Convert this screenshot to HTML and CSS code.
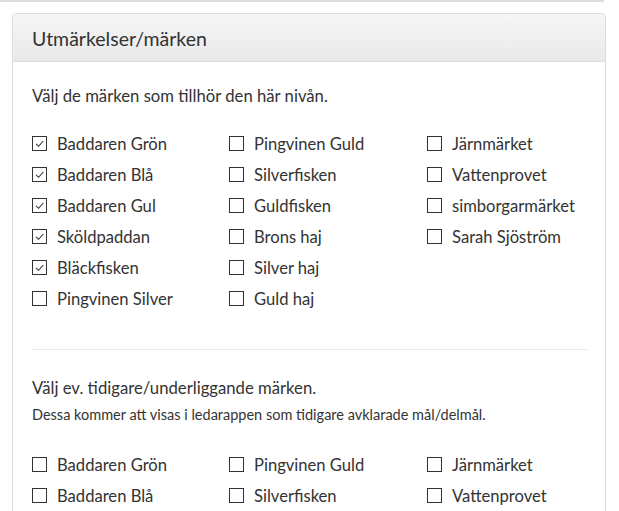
FILE: index.html
```html
<!DOCTYPE html>
<html lang="sv">
<head>
<meta charset="utf-8">
<title>Utmärkelser/märken</title>
<link rel="stylesheet" href="styles.css">
</head>
<body>
<div class="topline"></div>
<div class="panel">
  <div class="panel-heading">Utmärkelser/märken</div>
  <div class="panel-body">
    <p class="lead">Välj de märken som tillhör den här nivån.</p>
    <div class="grid first">
      <label class="cb"><span class="box on"><svg viewBox="0 0 13 13"><path d="M3 6.9 L5.6 9.3 L10.3 4"/></svg></span>Baddaren Grön</label>
      <label class="cb"><span class="box"></span>Pingvinen Guld</label>
      <label class="cb"><span class="box"></span>Järnmärket</label>
      <label class="cb"><span class="box on"><svg viewBox="0 0 13 13"><path d="M3 6.9 L5.6 9.3 L10.3 4"/></svg></span>Baddaren Blå</label>
      <label class="cb"><span class="box"></span>Silverfisken</label>
      <label class="cb"><span class="box"></span>Vattenprovet</label>
      <label class="cb"><span class="box on"><svg viewBox="0 0 13 13"><path d="M3 6.9 L5.6 9.3 L10.3 4"/></svg></span>Baddaren Gul</label>
      <label class="cb"><span class="box"></span>Guldfisken</label>
      <label class="cb"><span class="box"></span>simborgarmärket</label>
      <label class="cb"><span class="box on"><svg viewBox="0 0 13 13"><path d="M3 6.9 L5.6 9.3 L10.3 4"/></svg></span>Sköldpaddan</label>
      <label class="cb"><span class="box"></span>Brons haj</label>
      <label class="cb"><span class="box"></span>Sarah Sjöström</label>
      <label class="cb"><span class="box on"><svg viewBox="0 0 13 13"><path d="M3 6.9 L5.6 9.3 L10.3 4"/></svg></span>Bläckfisken</label>
      <label class="cb"><span class="box"></span>Silver haj</label>
      <span></span>
      <label class="cb"><span class="box"></span>Pingvinen Silver</label>
      <label class="cb"><span class="box"></span>Guld haj</label>
      <span></span>
    </div>
    <hr class="sep">
    <p class="lead second">Välj ev. tidigare/underliggande märken.</p>
    <p class="help">Dessa kommer att visas i ledarappen som tidigare avklarade mål/delmål.</p>
    <div class="grid">
      <label class="cb"><span class="box"></span>Baddaren Grön</label>
      <label class="cb"><span class="box"></span>Pingvinen Guld</label>
      <label class="cb"><span class="box"></span>Järnmärket</label>
      <label class="cb"><span class="box"></span>Baddaren Blå</label>
      <label class="cb"><span class="box"></span>Silverfisken</label>
      <label class="cb"><span class="box"></span>Vattenprovet</label>
    </div>
  </div>
</div>
</body>
</html>
```
FILE: styles.css
```css
html, body {
  margin: 0;
  padding: 0;
  background: #fff;
  overflow: hidden;
}
body {
  font-family: Lato, "Open Sans", "Liberation Sans", sans-serif;
  color: #333;
  font-size: 16.6px;
}
.topline {
  width: 604px;
  height: 2px;
  background: #dcdcdc;
}
.panel {
  margin: 11px 0 0 12px;
  width: 592px;
  border: 1px solid #dddddd;
  border-radius: 4px;
}
.panel-heading {
  height: 47px;
  line-height: 50px;
  padding-left: 19px;
  font-size: 19.5px;
  background: linear-gradient(#f6f6f6, #e9e9e9);
  border-bottom: 1px solid #dddddd;
  border-radius: 4px 4px 0 0;
}
.panel-body {
  padding: 22px 18px 40px 19px;
}
.lead {
  margin: 0;
  line-height: 24px;
  font-size: 16.7px;
}
.grid {
  display: grid;
  grid-template-columns: 197px 198px 1fr;
  grid-auto-rows: 31px;
  margin-top: 20px;
}
.cb {
  display: flex;
  align-items: center;
  gap: 10px;
  font-size: 16.6px;
}
.box {
  width: 13px;
  height: 13px;
  border: 1px solid #333;
  flex: none;
  display: flex;
}
.box svg {
  width: 13px;
  height: 13px;
  fill: none;
  stroke: #333;
  stroke-width: 1.1;
}
.sep {
  border: 0;
  border-top: 1px solid #eaeaea;
  margin: 35px 0 0 0;
  width: 556px;
}
.lead.second {
  margin-top: 26px;
}
.help {
  margin: 5px 0 0 0;
  font-size: 14.5px;
  line-height: 20px;
}
.help + .grid {
  margin-top: 24px;
}
```
